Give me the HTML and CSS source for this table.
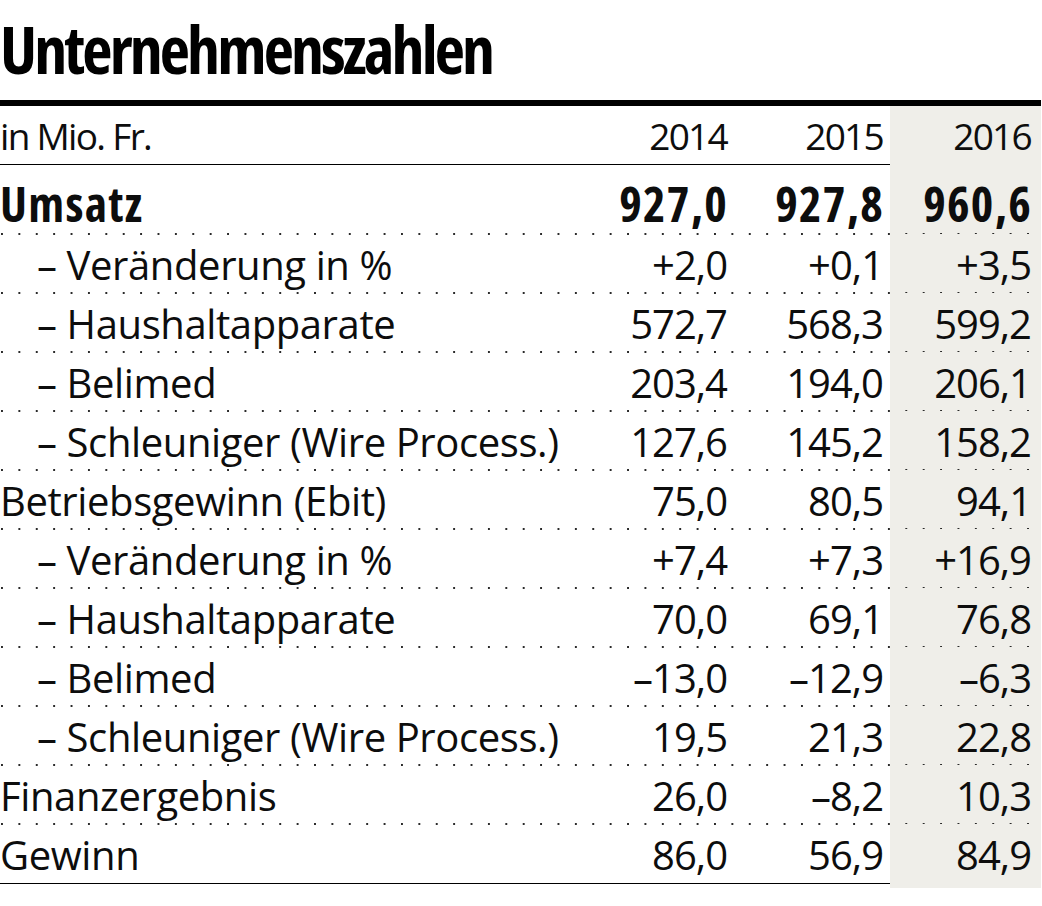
FILE: index.html
```html
<!DOCTYPE html>
<html lang="de">
<head>
<meta charset="utf-8">
<title>Unternehmenszahlen</title>
<link rel="stylesheet" href="styles.css">
</head>
<body>
<div class="sheet">
  <h1 class="title">Unternehmenszahlen</h1>
  <div class="figures">
    <div class="row head">
      <div class="cell label">in Mio. Fr.</div>
      <div class="cell num">2014</div>
      <div class="cell num mid">2015</div>
      <div class="cell num hl">2016</div>
    </div>
    <div class="row first strong dotted">
      <div class="cell label">Umsatz</div>
      <div class="cell num">927,0</div>
      <div class="cell num mid">927,8</div>
      <div class="cell num hl">960,6</div>
    </div>
    <div class="row dotted">
      <div class="cell label sub">– Veränderung in %</div>
      <div class="cell num">+2,0</div>
      <div class="cell num mid">+0,1</div>
      <div class="cell num hl">+3,5</div>
    </div>
    <div class="row dotted">
      <div class="cell label sub">– Haushaltapparate</div>
      <div class="cell num">572,7</div>
      <div class="cell num mid">568,3</div>
      <div class="cell num hl">599,2</div>
    </div>
    <div class="row dotted">
      <div class="cell label sub">– Belimed</div>
      <div class="cell num">203,4</div>
      <div class="cell num mid">194,0</div>
      <div class="cell num hl">206,1</div>
    </div>
    <div class="row dotted">
      <div class="cell label sub">– Schleuniger (Wire Process.)</div>
      <div class="cell num">127,6</div>
      <div class="cell num mid">145,2</div>
      <div class="cell num hl">158,2</div>
    </div>
    <div class="row dotted">
      <div class="cell label">Betriebsgewinn (Ebit)</div>
      <div class="cell num">75,0</div>
      <div class="cell num mid">80,5</div>
      <div class="cell num hl">94,1</div>
    </div>
    <div class="row dotted">
      <div class="cell label sub">– Veränderung in %</div>
      <div class="cell num">+7,4</div>
      <div class="cell num mid">+7,3</div>
      <div class="cell num hl">+16,9</div>
    </div>
    <div class="row dotted">
      <div class="cell label sub">– Haushaltapparate</div>
      <div class="cell num">70,0</div>
      <div class="cell num mid">69,1</div>
      <div class="cell num hl">76,8</div>
    </div>
    <div class="row dotted">
      <div class="cell label sub">– Belimed</div>
      <div class="cell num">–13,0</div>
      <div class="cell num mid">–12,9</div>
      <div class="cell num hl">–6,3</div>
    </div>
    <div class="row dotted">
      <div class="cell label sub">– Schleuniger (Wire Process.)</div>
      <div class="cell num">19,5</div>
      <div class="cell num mid">21,3</div>
      <div class="cell num hl">22,8</div>
    </div>
    <div class="row dotted">
      <div class="cell label">Finanzergebnis</div>
      <div class="cell num">26,0</div>
      <div class="cell num mid">–8,2</div>
      <div class="cell num hl">10,3</div>
    </div>
    <div class="row last">
      <div class="cell label">Gewinn</div>
      <div class="cell num">86,0</div>
      <div class="cell num mid">56,9</div>
      <div class="cell num hl">84,9</div>
    </div>
    <div class="row tail">
      <div class="cell"></div>
      <div class="cell"></div>
      <div class="cell"></div>
      <div class="cell hl"></div>
    </div>
  </div>
</div>
</body>
</html>
```

FILE: styles.css
```css
html, body {
  margin: 0;
  padding: 0;
  background: #ffffff;
}

body {
  font-family: "Open Sans", "Noto Sans", "Liberation Sans", sans-serif;
  color: #0d0d0d;
}

.sheet {
  width: 1041px;
}

.title {
  margin: 0;
  padding: 15px 0 19px 0;
  font-size: 66px;
  line-height: 66px;
  font-weight: 700;
  font-stretch: 75%;
  letter-spacing: -2.9px;
  color: #000;
  border-bottom: 6px solid #000;
}

.figures {
  display: flex;
  flex-direction: column;
}

.row {
  position: relative;
  display: grid;
  grid-template-columns: 580px 156px 154px 151px;
  height: 59px;
  font-size: 40px;
  line-height: 58px;
}

.cell {
  padding-top: 2px;
  white-space: nowrap;
}

.label {
  letter-spacing: -0.4px;
}

.label.sub {
  padding-left: 37px;
}

.num {
  text-align: right;
  padding-right: 9px;
  letter-spacing: -1px;
}

.num.mid {
  padding-right: 7px;
}

.hl {
  background: #efeee9;
}

.num.hl {
  padding-right: 10px;
}

.row.head {
  height: 58px;
  font-size: 37px;
  border-bottom: 1px solid #000;
}

.row.head .cell {
  padding-top: 1px;
  letter-spacing: -1.7px;
}

.row.first {
  height: 69px;
}

.row.first .cell {
  padding-top: 9px;
  line-height: 59px;
}

.row.strong {
  font-size: 48px;
  font-weight: 700;
  font-stretch: 75%;
}

.row.strong .cell {
  letter-spacing: 1.3px;
}

.row.strong .num {
  padding-right: 8px;
}

.row.strong .num.mid {
  padding-right: 6px;
}

.row.strong .num.hl {
  padding-right: 9px;
}

.row.dotted::after {
  content: "";
  position: absolute;
  left: 0;
  right: 0;
  bottom: -1px;
  height: 2px;
  background-image: linear-gradient(to right, #2a2a2a 0, #2a2a2a 2px, transparent 2px);
  background-size: 17.4px 2px;
  background-position: 1px 0;
  background-repeat: repeat-x;
}

.row.last {
  border-bottom: 1px solid #000;
}

.row.tail {
  height: 4px;
}
```
